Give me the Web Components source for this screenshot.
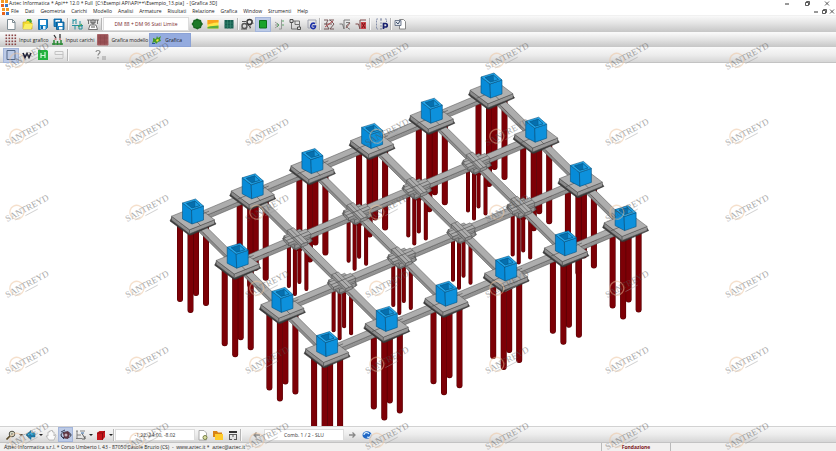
<!DOCTYPE html>
<html lang="it">
<head>
<meta charset="utf-8">
<title>Api++ - Grafica 3D</title>
<style>
html, body { margin: 0; height: 100%; }
body { overflow: hidden; background: #fff; color: #222; font-family: "Open Sans", "Noto Sans", sans-serif; font-size: 5px; line-height: 8px; }
</style>
</head>
<body>
<api-window></api-window>
<script>
const svg = (body, w = 16, h = 14) => `<svg width="${w}" height="${h}" viewBox="0 0 ${w} ${h}" aria-hidden="true">${body}</svg>`;
const dots = (() => { let s = ''; for (let y = 0; y < 4; y++) for (let x = 0; x < 4; x++) s += `<path d="M${x * 3 + .5} ${y * 3 + .5}h1.6v1.6h-1.6z"/>`; return s; })();
const ICONS = {
  app: svg('<path d="M0 0h3v3H0zM4 0h3v3H4z" fill="#f39a24"/><path d="M0 4h3v3H0z" fill="#e8641b"/><path d="M4 4h3v3H4z" fill="#3d7ac4"/>', 7, 7),
  fresh: svg('<path d="M4.500 2.500h5l2.500 2.500v7.500h-7.500z" fill="#fff" stroke="#7f8d94"/><path d="M9.500 2.500v3h2.500" fill="none" stroke="#7f8d94"/>'),
  open: svg('<path d="M4 5h3l1-2h4v3h1v6H4z" fill="#f2dc2e" stroke="#c8ab24" stroke-width=".7"/><path d="M8 2h4l1 3-2 1-1-2H8z" fill="#4aa33a"/><path d="M4 12l2-5h8l-2 5z" fill="#fbef62"/>'),
  save: svg('<path d="M3.500 2.500h9v8l-2 2H3.500z" fill="#168bd0" stroke="#085e9c" stroke-width=".8"/><path d="M5 3h6v5H5z" fill="#fff"/><path d="M5.500 9h5v3.500h-5z" fill="#e9f5fb"/><path d="M6 9h2v3H6z" fill="#096bb0"/>'),
  saveall: svg('<path d="M3 2h7.500v7.500H3z" fill="#1b83c4" stroke="#085e9c" stroke-width=".8"/><path d="M4.500 3h4.500v2h-4.500z" fill="#fff"/><path d="M5.500 5h7.500v7.500h-7.500z" fill="#1b83c4" stroke="#075488" stroke-width=".8"/><path d="M7 6h4.500v3H7zM8 10h3.500v2.500H8z" fill="#fff"/>'),
  units: svg('<path d="M4 2v5M7 2v5M4 4l3-1.500M10 9h3v3h-3zM6 9v3.500M11 4v4M3 8.500h11" stroke="#23909e" stroke-width="1" fill="none"/><path d="M9 10l4-3" stroke="#4ba843"/>'),
  balance: svg('<path d="M2 3h12M3.500 3v4M12.500 3v4M8 2v6M5 8h6l1.500 4.500h-9z" stroke="#666" fill="#fff" stroke-width=".9"/><path d="M6 3v3h4V3M6 10h4" stroke="#444" fill="none" stroke-width=".9"/>'),
  earth: svg('<path d="M8 1.500l2 1 2 .5.500 2 1.500 2-1.500 2-.5 2-2 .5-1.500 1-2-1-2-.5-.5-2-1.500-2 1.500-2 .5-2 2-.5z" fill="#176420"/><circle cx="8" cy="7" r="3.500" fill="#1d7a29"/>'),
  strata: svg('<path d="M2.500 3h11v8.500h-11z" fill="#ffe646"/><path d="M2.500 3h11v2.500c-5 0-7 1-11 2z" fill="#f9a31d"/><path d="M2.500 10c4-1.500 7-1 11-1.500v3h-11z" fill="#5caf3c"/>'),
  grid: svg('<path d="M3.500 3h9v8.500h-9z" fill="#175f51"/><path d="M3.500 6h9M3.500 9h9M6.500 3v8.500M9.500 3v8.500" stroke="#3b8f77" stroke-width=".6"/>'),
  gears: svg('<circle cx="5.500" cy="9" r="2.500" fill="none" stroke="#555" stroke-width="1.400"/><circle cx="10.500" cy="5" r="2.500" fill="none" stroke="#333" stroke-width="1.400"/><path d="M3 4.500h4M11 8v3.500M13 3l1 4M2 12h6M9 8l3 3" stroke="#555" fill="none"/>'),
  square: svg('<path d="M4.500 3.500h7v7.500h-7z" fill="#19a32b" stroke="#0c701a"/>'),
  load: svg('<path d="M10.500 2.500v9.500H8M4 5l4 3M4 8h4M4 11l4-3" stroke="#999" fill="none"/><path d="M11 4h2M11 8h2M6 6.500l2 1.500-2 2" stroke="#5da769" fill="none"/>'),
  frame: svg('<path d="M4.500 4h8v8M4.500 5v7H11M8 4v3.500h4" stroke="#666" fill="none" stroke-width=".9"/><path d="M3 2.500h3v3H3zM10.500 10h3v2.500h-3z" stroke="#444" fill="#ddd" stroke-width=".9"/>'),
  rotate: svg('<path d="M13 3H5v8h2M13 3v4" stroke="#9a9daa" fill="none" stroke-width=".9"/><path d="M12 6.500c-4-1.500-6 4-2.500 5 2 .5 3-1 3-2.500h-3" fill="none" stroke="#1c30a8" stroke-width="1.600"/>'),
  calc1: svg('<path d="M3 3h4l-2 4 3 5M9 3l4 4-4 5h4M3 12h5M8 3h5M3 7h8" stroke="#69494b" fill="none" stroke-width=".9"/><path d="M4 10l8-6" stroke="#b74c51"/>'),
  calc2: svg('<path d="M2.500 7h3l1.500 5V3h6M9 5.500h4L9 9l3 3h1" stroke="#707070" fill="none" stroke-width=".9"/><path d="M9 11l4-5" stroke="#9b5d5a"/>'),
  calc3: svg('<path d="M2.500 7h3l1.500 5V3h6" stroke="#7f4a4a" fill="none"/><path d="M8 5h5v7H8z" fill="#c9444a"/><path d="M9 6l3 5M12 6l-3 5" stroke="#7a1014"/>'),
  parking: svg('<path d="M4 2H2.500v10H4M7 2v10M6 12h3M6 2h3M11 2h1.500v3" stroke="#8790aa" fill="none" stroke-dasharray="2 1"/><path d="M9.500 12V6.500h2a1.500 1.500 0 010 3.500h-2" stroke="#17206f" stroke-width="1.700" fill="none"/>'),
  report: svg('<path d="M7.500 2.500h4l2 2v7.500h-6z" fill="#fff" stroke="#888"/><path d="M3 3.500h6v5H3z" fill="#dfe3ea" stroke="#647186" stroke-width=".9"/><path d="M4 5l2 2 2-3" stroke="#42546e" fill="none"/>'),
  dots: svg(`<g fill="#8a4545">${dots}</g>`, 12, 12),
  loads: svg('<path d="M0 10h11M2 6v5M5.500 7v4M9 6v5" stroke="#2a8a35" stroke-width="1.500"/><path d="M2 1l2 3M8 0v4" stroke="#333" stroke-width="1.300"/><path d="M2.500 5h2M7 5h2" stroke="#a33"/>', 12, 12),
  maroon: svg('<path d="M.5.5h10.500v10.500H.5z" fill="#995155" stroke="#a76569"/><path d="M3.500 1v10M7.500 1v10M1 4h10M1 8h10" stroke="#89464a" stroke-width=".5"/>', 12, 12),
  leaf: svg('<path d="M2 4l3 1 1-3 1 2 3-2-1 3 1 2-3 1-2 2-1-2-3 1 1-2z" fill="#459928"/><path d="M5 6l2-1 1 1-2 2z" fill="#f3e53c"/><path d="M1 9.500h3" stroke="#2458a0"/>', 12, 12),
  outline: svg('<path d="M4 2.500h8v9H4z" fill="none" stroke="#526787"/>'),
  w: svg('<path d="M4 5l2 4.500L8 5.500l2 4L12 5" stroke="#15152f" stroke-width="1.600" fill="none"/>'),
  greenh: svg('<path d="M3 2h9l1 1v9H3z" fill="#24b33f"/><path d="M6 10V5M10 10V4M6 7.500h4" stroke="#d5f5da" stroke-width="1.200"/>'),
  dim: svg('<path d="M4 3.500h8v3H4zM4 10.500h8M12 6v4" stroke="#c3c3c3" fill="none"/>'),
  query: svg('<path d="M3 4c0-2 4-2 4 0 0 1.500-2 1.500-2 3.500M5 9v1.500" stroke="#888" stroke-width="1.200" fill="none"/><path d="M9 9h4M9 11h4" stroke="#999"/>'),
  zoom: svg('<circle cx="9" cy="6" r="2.800" fill="#f3f5dc" stroke="#4b4b42"/><path d="M7 8l-3.500 3.500" stroke="#594a28" stroke-width="1.700"/><path d="M9 4.500v3M7.500 6h3" stroke="#666" stroke-width=".7"/>'),
  back: svg('<path d="M3 7l5-4.500v2.500h4v4H8v2.500z" fill="#1684ba" stroke="#075c8b" stroke-width=".5"/><path d="M5 7l3-2v1h4" stroke="#51c2e7" fill="none"/>'),
  hand: svg('<path d="M6 12L3 8l2 0V4h1.500V3H8v-.5h1.500V4H11v4l1-1.500 1 .5-2 5z" fill="#fafafa" stroke="#aaa" stroke-width=".7"/>'),
  orbit: svg('<ellipse cx="8" cy="7" rx="5" ry="3" fill="none" stroke="#343849"/><path d="M5 5l5-2 2 3-2 5-4-1z" fill="#603441"/><circle cx="8" cy="7" r="1.500" fill="#c3b3bc"/><path d="M3 4l4-2M3 8l3 3" stroke="#38405b"/>'),
  axes: svg('<path d="M4 3v8M3 3h2M3 10.500h6M4 7h4M7 3h5" stroke="#777" fill="none" stroke-width=".9"/><path d="M9 5.500l3 5M12 8v3h-3" stroke="#555" fill="none" stroke-width=".9"/><path d="M8 5h3" stroke="#3b6eaa"/>'),
  cube: svg('<path d="M4 5l2.500-2H12v6l-2.500 3H4z" fill="#c5161c"/><path d="M4 5h5.500v7M9.500 5L12 3" stroke="#7c090d" stroke-width=".8" fill="none"/>'),
  notes: svg('<path d="M4 2.500h5l2.500 2.500v7H4z" fill="#fff" stroke="#999" stroke-width=".8"/><circle cx="10" cy="9.500" r="2" fill="#dce0a6" stroke="#788044"/>'),
  folder: svg('<path d="M3 3h4l1 1.500h4V9H3z" fill="#d78316"/><path d="M5 6h8v6H5z" fill="#ffcc2c"/>'),
  table: svg('<path d="M4 3h8v2H4z" fill="#333"/><path d="M4 6.500h8M4.500 7v5M8 7v2M11.500 7v5M4 11.500h3M9 11.500h3" stroke="#5b5b5b"/>'),
  prev: svg('<path d="M11 7H5M7.500 4.500L5 7l2.500 2.500" stroke="#888" fill="none" stroke-width="1.300"/>'),
  next: svg('<path d="M5 7h6M8.500 4.500L11 7 8.500 9.500" stroke="#888" fill="none" stroke-width="1.300"/>'),
  refresh: svg('<ellipse cx="8" cy="7" rx="4.500" ry="3.800" fill="#1f67c5"/><path d="M5 7c0-3 4-3 5-1M8 9c2 1 4 0 4-3" stroke="#d5ecff" fill="none" stroke-width="1.200"/>'),
  min: svg('<path d="M2 4h4" stroke="#333"/>', 8, 7),
  restore: svg('<path d="M2.500 2.500h3v3h-3zM3.500 2.500v-1h3v3h-1" stroke="#333" stroke-width=".8" fill="none"/>', 8, 7),
  close: svg('<path d="M2 1.500l4 4M6 1.500l-4 4" stroke="#333" stroke-width=".8"/>', 8, 7)
};

function define(name, css, html) {
  customElements.define(name, class extends HTMLElement {
    connectedCallback() {
      if (this.shadowRoot) return;
      const root = this.attachShadow({ mode: 'open' });
      root.innerHTML = `<style>*{box-sizing:border-box}${css}</style>` + (typeof html === 'function' ? html(this) : html);
    }
  });
}

define('tool-button', `
  :host { display: flex; flex: none; width: var(--tool-width, 16px); height: 15px; }
  :host([slim]) { width: 8px; height: 7px; }
  :host([drop]) { width: 5px; }
  button { all: unset; display: flex; align-items: center; justify-content: center; width: 100%; height: 100%; }
  :host([active]) button { background: #bccae6; box-shadow: inset 0 0 0 1px #a3b5da; }
  svg { flex: none; }
  i { border: 2px solid transparent; border-top-color: #222; border-bottom: 0; }
`, el => `<button type="button" aria-label="${el.getAttribute('label') || el.getAttribute('icon') || 'Apri menu'}">${el.hasAttribute('drop') ? '<i></i>' : ICONS[el.getAttribute('icon')]}</button>`);

define('tool-sep', `:host { display: block; flex: none; width: 2px; height: 12px; border-left: 1px solid #b5b5b5; border-right: 1px solid #f8f8f8; }`, '');

define('tool-tab', `
  :host { display: flex; flex: none; height: 14px; }
  button { all: unset; display: flex; align-items: center; gap: 2px; padding: 0 1px 0 2px; font-size: 5px; white-space: nowrap; }
  :host([active]) button { background: #94abdf; box-shadow: inset 0 0 0 1px #8ba2d6; padding: 0 9px 0 2px; }
  svg { flex: none; }
`, el => `<button type="button">${ICONS[el.getAttribute('icon')]}<span><slot></slot></span></button>`);

define('tool-bar', `
  :host { display: flex; flex: none; align-items: center; height: 15px; padding: 0 3px; background: linear-gradient(#f9f9f9, #e4e4e4 45%, #c6c6c6); border-bottom: 1px solid #f9f9f9; }
  :host([tall]) { height: 17px; }
  :host([light]) { background: linear-gradient(#f8f8f8, #ececec 50%, #d6d6d6); border-bottom: 1px solid #c3c3c3; }
  :host([dense]) { --tool-width: 15px; border-top: 1px solid #d2d2d2; }
`, '<slot></slot>');

define('tool-field', `
  :host { display: flex; flex: none; width: 80px; height: 12px; }
  :host([wide]) { width: 86px; height: 14px; }
  input { width: 100%; height: 100%; margin: 0; padding: 0; border: 1px solid #dcdcdc; background: #fff; text-align: center; font: inherit; color: #333; outline: 0; }
  :host([wide]) input { color: #78292b; }
`, el => `<input type="text" readonly aria-label="${el.getAttribute('label')}" value="${el.getAttribute('value')}">`);

define('title-bar', `
  :host { display: flex; flex: none; align-items: center; height: 7px; padding: 0 5px 0 1px; gap: 1px; line-height: 7px; }
  span { flex: 1; white-space: pre; }
  nav { display: flex; gap: 12px; }
`, `${ICONS.app}<span>Aztec Informatica * Api++ 12.0 * Full  [C:\\Esempi API\\API++\\Esempio_13.pia]  - [Grafica 3D]</span>
  <nav><tool-button slim icon="min" label="Riduci a icona"></tool-button><tool-button slim icon="restore" label="Ripristina"></tool-button><tool-button slim icon="close" label="Chiudi"></tool-button></nav>`);

define('menu-bar', `
  :host { display: flex; flex: none; align-items: center; height: 9px; padding-left: 2px; border-bottom: 1px solid #f1f1f1; }
  nav { display: flex; flex: 1; gap: 6px; margin-left: 2px; }
  nav button { all: unset; white-space: nowrap; }
`, `${ICONS.app}<nav>${['File', 'Dati', 'Geometria', 'Carichi', 'Modello', 'Analisi', 'Armature', 'Risultati', 'Relazione', 'Grafica', 'Window', 'Strumenti', 'Help'].map(t => `<button type="button">${t}</button>`).join('')}</nav>
  <tool-button slim icon="min" label="Riduci finestra"></tool-button><tool-button slim icon="restore" label="Ripristina finestra"></tool-button><tool-button slim icon="close" label="Chiudi finestra"></tool-button>`);

/* Isometric foundation: 6 x 4 plinths joined by beams, on piles. */
function drawModel() {
  const U = [59.7, -25.2], V = [44.7, 44.2], O = [193, 155];
  const at = (i, j) => [O[0] + U[0] * i + V[0] * j, O[1] + U[1] * i + V[1] * j];
  const poly = (pts, fill, stroke = '#4c4c4c', w = .5) => `<path d="M${pts.map(p => p[0].toFixed(1) + ' ' + p[1].toFixed(1)).join('L')}Z" fill="${fill}" stroke="${stroke}" stroke-width="${w}" stroke-linejoin="round"/>`;
  const box = (c, a, b, h, top, left, right) => {
    const L = [c[0] - a[0] - b[0], c[1] - a[1] - b[1]], F = [c[0] - a[0] + b[0], c[1] - a[1] + b[1]];
    const R = [c[0] + a[0] + b[0], c[1] + a[1] + b[1]], T = [c[0] + a[0] - b[0], c[1] + a[1] - b[1]];
    const d = p => [p[0], p[1] + h];
    return poly([L, F, d(F), d(L)], left) + poly([F, R, d(R), d(F)], right) + poly([L, F, R, T], top);
  };
  const outer = (i, j) => i === 0 || i === 5 || j === 0 || j === 3;
  const nodes = [];
  for (let j = 0; j < 4; j++) for (let i = 5; i >= 0; i--) nodes.push([i, j]);
  nodes.sort((p, q) => at(...p)[1] - at(...q)[1]);
  let s = '';
  for (const [i, j] of nodes) {
    const [x, y] = at(i, j);
    const piles = outer(i, j) ? [[3, 78, 6], [-13, 84, 6], [13, 88, 6], [-2.500, 95, 6]] : [[2, 47, 4], [-8.500, 51, 4], [9, 54, 4], [-2.500, 59, 4]];
    for (const [dx, len, w] of piles) {
      s += `<path d="M${x + dx} ${y + 4}V${y + len - w / 2}" stroke="#540005" stroke-width="${w}" stroke-linecap="round"/>`;
      s += `<path d="M${x + dx} ${y + 4}V${y + len - w / 2}" stroke="#7d0006" stroke-width="${w - 1}" stroke-linecap="round"/>`;
    }
  }
  const mid = (p, q) => [(p[0] + q[0]) / 2, (p[1] + q[1]) / 2];
  const line = (p, q) => `<path d="M${p}L${q}" stroke="#4a4a4a" stroke-width=".6"/>`;
  const beam = (p, q, along, across, h) => box(mid(p, q), along, across, h, '#adadad', '#8d8d8d', '#939393');
  for (let i = 5; i >= 0; i--) for (let j = 0; j < 3; j++) s += beam(at(i, j), at(i, j + 1), [3.200, -1.300], [V[0] / 2, V[1] / 2], 3.500);
  for (let j = 0; j < 4; j++) for (let i = 4; i >= 0; i--) s += beam(at(i, j), at(i + 1, j), [U[0] / 2, U[1] / 2], [2.100, 2.100], 4);
  for (const [i, j] of nodes) {
    const [x, y] = at(i, j);
    if (outer(i, j)) {
      s += poly([[x - 23, y + 3], [x - 21, y - 1], [x + 21, y + 3], [x + 23, y + 6], [x - 2, y + 17], [x - 4, y + 17]], '#3a3a3a', '#333', .6);
      s += box([x, y], [12.500, -5], [9, 6.800], 4, '#b0b0b0', '#8c8c8c', '#989898');
      if (i < 5) s += line([x, y], [x + 16, y - 6.800]);
      if (i > 0) s += line([x - 15, y + 6.300], [x, y]);
      if (j < 3) s += line([x, y], [x + 8, y + 8]);
      const P = (a, b) => [x + a, y + b], c = '#04507f', e = .6;
      s += poly([P(-10.500, -15), P(-1.500, -8), P(-1, 6), P(-10.500, 1)], '#078bd8', c, e);
      s += poly([P(-1.500, -8), P(10.500, -12), P(10.500, 2), P(-1, 6)], '#0d91dc', c, e);
      s += poly([P(-10.500, -15), P(2.500, -19), P(10.500, -12), P(-1.500, -8)], '#21a5ea', c, e);
      s += poly([P(-6.500, -14.500), P(1.800, -17), P(6.800, -12.500), P(-1, -10)], '#056fae', c, e);
      s += poly([P(1.800, -17), P(6.800, -12.500), P(2, -11)], '#1b9be1', c, .4);
    } else {
      s += poly([[x - 15, y + 2], [x - 13, y - 1], [x + 13, y], [x + 15, y + 4], [x - 1, y + 13], [x - 4, y + 12]], '#777', '#444', .5);
      s += box([x, y], [8, -3.400], [5.500, 4.500], 4, '#a8a8a8', '#8a8a8a', '#949494');
      s += box([x, y - 1], [11, -4.600], [2.400, 2.400], 3, '#adadad', '#8a8a8a', '#949494');
      s += box([x, y - 1], [3.200, -1.300], [7, 7], 3, '#adadad', '#8a8a8a', '#949494');
      s += line([x - 11, y + 3.600], [x + 11, y - 5.600]) + line([x - 7, y - 8], [x + 7, y + 6]);
    }
  }
  return s;
}

define('model-view', `
  :host { display: block; flex: 1; min-height: 0; overflow: hidden; background: #fff; }
  svg { display: block; width: 100%; height: 100%; }
`, () => `<svg viewBox="0 0 836 363" preserveAspectRatio="xMidYMin slice" fill="none" role="img" aria-label="Modello 3D della fondazione">${drawModel()}</svg>`);

define('status-bar', `
  :host { display: grid; flex: none; grid-template-columns: 1fr 70px 165px; align-items: center; height: 8px; background: #f1f0ef; white-space: pre; overflow: hidden; }
  span { padding-left: 4px; }
  b { text-align: center; color: #7c1822; border: solid #bbb; border-width: 0 1px; }
`, `<span>Aztec Informatica s.r.l. * Corso Umberto I, 43 - 87050 Casole Bruzio (CS)  -  www.aztec.it *  aztec@aztec.it</span><b>Fondazione</b>`);

define('brand-overlay', `
  :host { position: absolute; inset: 0; pointer-events: none; overflow: hidden; }
  svg { display: block; width: 100%; height: 100%; }
  text { font: 9px "Liberation Serif", serif; fill: #555; text-anchor: middle; }
`, () => {
  let s = '';
  for (let r = 0; r < 6; r++) for (let c = 0; c < 7; c++)
    s += `<g transform="translate(${27 + c * 120} ${56 + r * 76}) rotate(-28)"><circle cx="-11" cy="-1" r="7" fill="none" stroke="#eec39b" stroke-width="1.300"/><text y="3">SANTREYD</text><path d="M-5 6H9M-16 5h6" stroke="#999" stroke-width=".8"/></g>`;
  return `<svg opacity=".5" aria-hidden="true">${s}</svg>`;
});

const b = (...names) => names.map(n => `<tool-button icon="${n}"></tool-button>`).join('');
define('api-window', `
  :host { position: relative; display: flex; flex-direction: column; height: 100vh; overflow: hidden; }
  .gap3 { width: 3px; } .gap7 { width: 7px; } .gap24 { width: 24px; }
`, `
  <title-bar></title-bar>
  <menu-bar></menu-bar>
  <tool-bar tall>${b('fresh', 'open', 'save', 'saveall')}<tool-sep></tool-sep>${b('units', 'balance')}<tool-sep></tool-sep>
    <tool-field wide label="Normativa" value="DM 88 + DM 96 Stati Limite"></tool-field>${b('earth', 'strata', 'grid')}<tool-sep></tool-sep>${b('gears')}<tool-button active icon="square"></tool-button>${b('load', 'frame', 'rotate')}<tool-sep></tool-sep>${b('calc1', 'calc2', 'calc3')}<tool-sep></tool-sep><span class="gap3"></span>${b('parking')}<tool-sep></tool-sep>${b('report')}
  </tool-bar>
  <tool-bar>
    <tool-tab icon="dots">Input grafico</tool-tab><tool-tab icon="loads">Input carichi</tool-tab><tool-tab icon="maroon">Grafica modello</tool-tab><tool-tab active icon="leaf">Grafica</tool-tab>
  </tool-bar>
  <tool-bar light><tool-button active icon="outline"></tool-button>${b('w', 'greenh', 'dim')}<tool-sep></tool-sep><span class="gap24"></span>${b('query')}</tool-bar>
  <model-view></model-view>
  <tool-bar light tall dense>${b('zoom')}<tool-button drop></tool-button>${b('back')}<tool-button drop></tool-button>${b('hand')}<tool-button active icon="orbit"></tool-button>${b('axes')}<tool-button drop></tool-button>${b('cube')}<tool-button drop></tool-button><tool-sep></tool-sep>
    <tool-field label="Coordinate" value="-1.22, 24.00, -8.02"></tool-field>${b('notes', 'folder', 'table')}<tool-sep></tool-sep><span class="gap7"></span>${b('prev')}<tool-field label="Combinazione" value="Comb. 1 / 2 - SLU"></tool-field>${b('next', 'refresh')}
  </tool-bar>
  <status-bar></status-bar>
  <brand-overlay></brand-overlay>
`);
</script>
</body>
</html>
